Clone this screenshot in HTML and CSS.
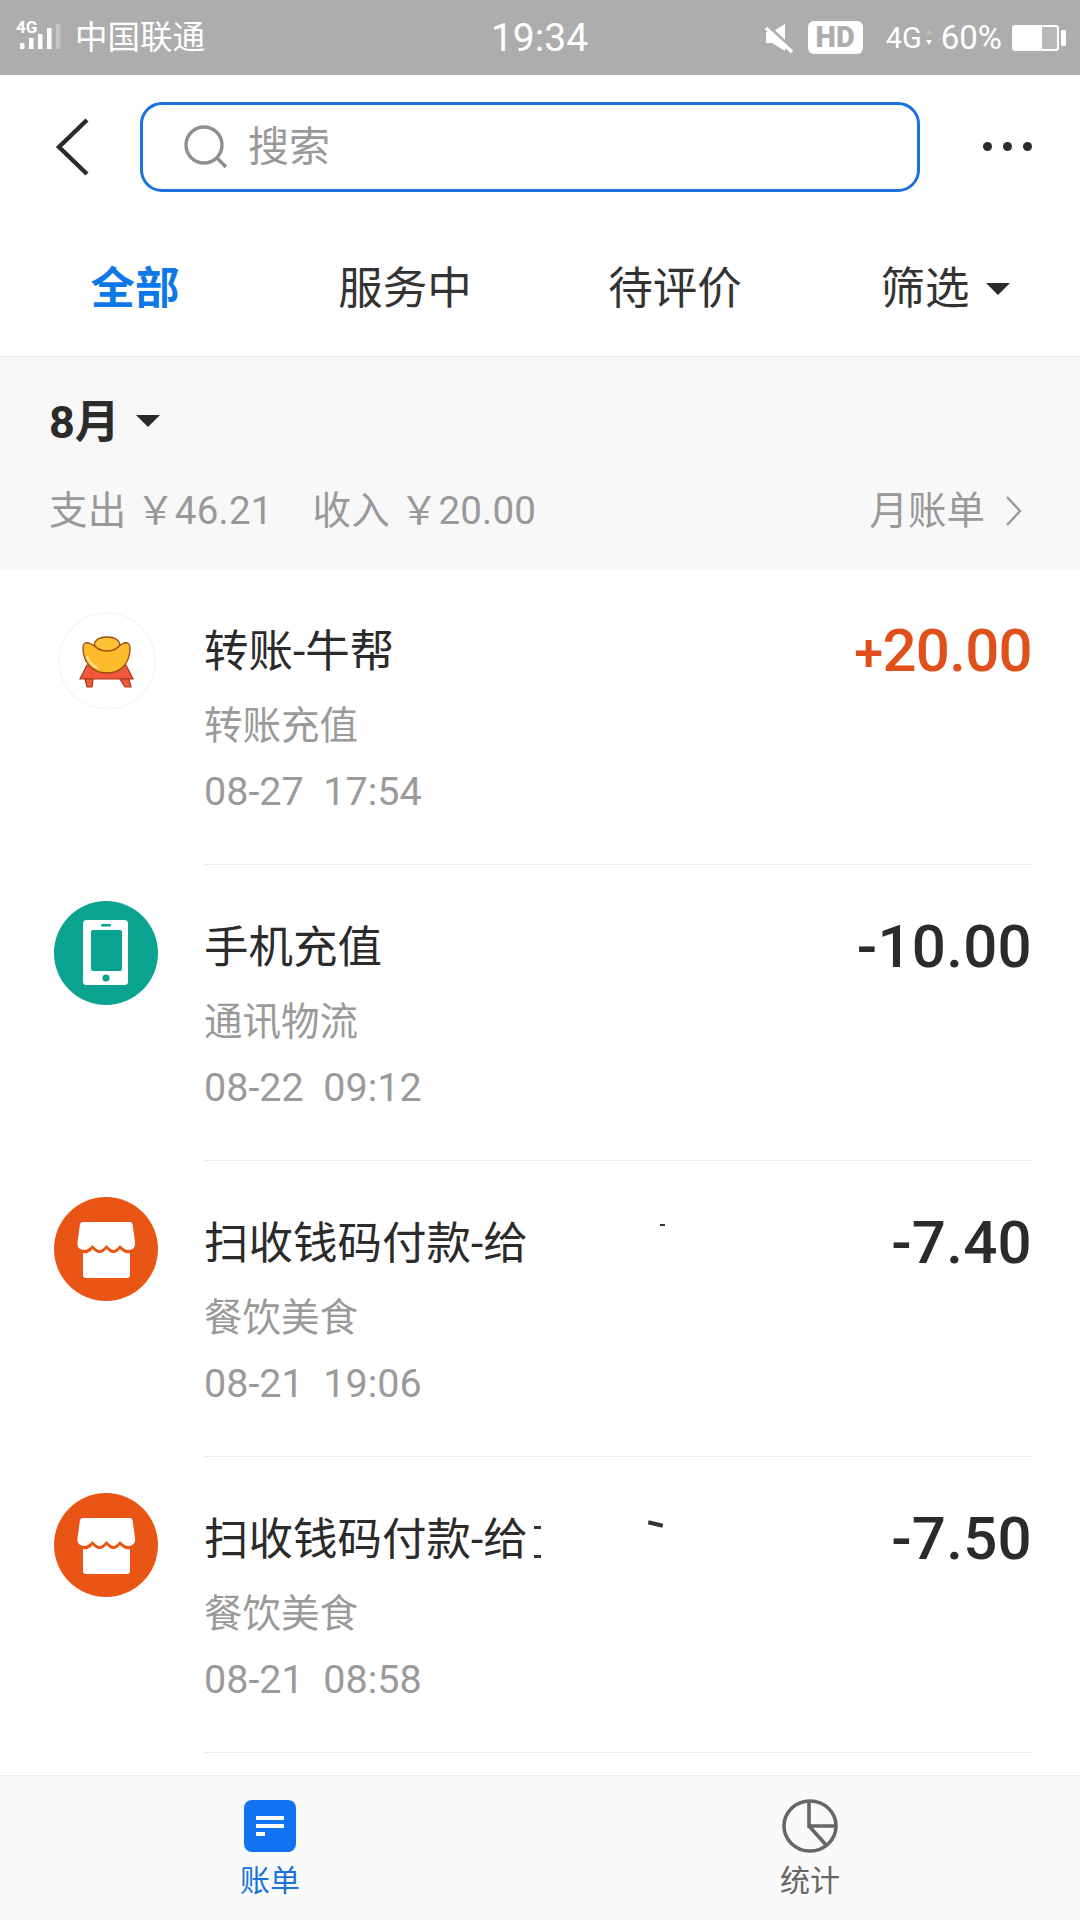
FILE: index.html
```html
<!DOCTYPE html>
<html lang="zh-CN">
<head>
<meta charset="utf-8">
<title>账单</title>
<link rel="stylesheet" href="styles.css">
</head>
<body>
<div class="page">
  <header class="status">
    <div class="status-left">
      <svg class="signal" viewBox="0 0 46 36" width="46" height="36">
        <text x="0" y="15" class="net-label">4G</text>
        <rect x="4" y="25" width="4.500" height="6" rx="1" fill="#fff"/>
        <rect x="13" y="20" width="4.500" height="11" fill="#fff"/>
        <rect x="22" y="16" width="4.500" height="15" fill="#fff"/>
        <rect x="31" y="10" width="4.500" height="21" fill="#fff"/>
        <rect x="40" y="6" width="4.500" height="25" fill="#c6c6c6"/>
      </svg>
      <span class="carrier">中国联通</span>
    </div>
    <div class="time">19:34</div>
    <div class="status-right">
      <svg class="mute" viewBox="0 0 28 30" width="28" height="30">
        <path d="M1 9h6l13-8v27L7 20H1z" fill="#fff"/>
        <path d="M0 0l25 24" stroke="#adadad" stroke-width="3.400" fill="none"/>
        <path d="M1 5l26 24" stroke="#fff" stroke-width="3.400" fill="none"/>
      </svg>
      <span class="hd">HD</span>
      <span class="net">4G<svg class="arrows" viewBox="0 0 8 24" width="8" height="24"><path d="M4 4l3 4H1z" fill="#c4c4c4"/><path d="M4 19l3-5H1z" fill="#fff"/></svg></span>
      <span class="pct">60%</span>
      <span class="battery"><span class="battery-body"><span class="battery-fill"></span></span><span class="battery-nub"></span></span>
    </div>
  </header>

  <nav class="nav">
    <svg class="back" viewBox="0 0 36 60" width="36" height="60"><path d="M33 3L5 30l28 27" fill="none" stroke="#2b2b2b" stroke-width="4.400"/></svg>
    <div class="search">
      <svg class="search-icon" viewBox="0 0 46 46" width="46" height="46"><circle cx="21" cy="21" r="18" fill="none" stroke="#8f8f8f" stroke-width="3.400"/><path d="M34 34l9 9" stroke="#8f8f8f" stroke-width="3.400" fill="none"/></svg>
      <span class="search-text">搜索</span>
    </div>
    <div class="more"><i></i><i></i><i></i></div>
  </nav>

  <div class="tabs">
    <div class="tab tab-active">全部</div>
    <div class="tab">服务中</div>
    <div class="tab">待评价</div>
    <div class="tab">筛选<span class="caret caret-lg"></span></div>
  </div>

  <section class="summary">
    <div class="month">8月<span class="caret"></span></div>
    <div class="totals">
      <div class="totals-left"><span>支出 ￥46.21</span><span>收入 ￥20.00</span></div>
      <div class="bill-link">月账单<svg viewBox="0 0 18 32" width="18" height="32"><path d="M2 2l13 14L2 30" fill="none" stroke="#999" stroke-width="2.400"/></svg></div>
    </div>
  </section>

  <main class="list">
    <article class="row">
      <div class="avatar">
        <svg viewBox="0 0 104 104" width="104" height="104">
          <g transform="translate(0 1)">
            <circle cx="53" cy="55" r="48" fill="#fff" stroke="#f6f6f6" stroke-width="1.500"/>
            <path d="M33 59h39l7 14H26z" fill="#f4583a" stroke="#a5361c" stroke-width="1.200"/>
            <path d="M31 73h8l-1 8h-5zM66 73h9l2 8h-6z" fill="#f4583a" stroke="#a5361c" stroke-width="1.200"/>
            <path d="M35 37c-4-1-6 1-6 5 0 14 9 25 24 25s23-11 23-25c0-4-2-6-6-5l-6 3H41z" fill="#fcbb2a" stroke="#9c4a15" stroke-width="1.300"/>
            <path d="M40 39c1-6 6-8 13-8s12 2 13 8c-3 4-8 6-13 6s-10-2-13-6z" fill="#fcc135" stroke="#9c4a15" stroke-width="1.300"/>
            <path d="M33 50c2 6 6 10 11 12" fill="none" stroke="#fde9b0" stroke-width="1.800"/>
          </g>
        </svg>
      </div>
      <div class="row-body">
        <div class="row-text">
          <div class="title">转账-牛帮</div>
          <div class="sub">转账充值</div>
          <div class="date">08-27&nbsp;&nbsp;17:54</div>
        </div>
        <div class="amount amount-in"><span class="plus">+</span>20.00</div>
      </div>
    </article>

    <article class="row">
      <div class="avatar">
        <svg viewBox="0 0 104 104" width="104" height="104">
          <circle cx="52" cy="52" r="52" fill="#0aa38f"/>
          <rect x="29" y="19" width="45" height="65" rx="3.500" fill="#fff"/>
          <rect x="37" y="29" width="31" height="41" rx="2" fill="#0aa38f"/>
          <rect x="47" y="23" width="10" height="2.400" rx="1.200" fill="#0aa38f"/>
          <circle cx="52" cy="77" r="3.600" fill="#0aa38f"/>
        </svg>
      </div>
      <div class="row-body">
        <div class="row-text">
          <div class="title">手机充值</div>
          <div class="sub">通讯物流</div>
          <div class="date">08-22&nbsp;&nbsp;09:12</div>
        </div>
        <div class="amount">-10.00</div>
      </div>
    </article>

    <article class="row">
      <div class="avatar">
        <svg viewBox="0 0 104 104" width="104" height="104">
          <use href="#shop"/>
        </svg>
      </div>
      <div class="row-body">
        <div class="row-text">
          <div class="title">扫收钱码付款-给<i class="frag frag-a"></i></div>
          <div class="sub">餐饮美食</div>
          <div class="date">08-21&nbsp;&nbsp;19:06</div>
        </div>
        <div class="amount">-7.40</div>
      </div>
    </article>

    <article class="row">
      <div class="avatar">
        <svg viewBox="0 0 104 104" width="104" height="104">
          <use href="#shop"/>
        </svg>
      </div>
      <div class="row-body">
        <div class="row-text">
          <div class="title">扫收钱码付款-给<i class="frag frag-b"></i><i class="frag frag-c"></i></div>
          <div class="sub">餐饮美食</div>
          <div class="date">08-21&nbsp;&nbsp;08:58</div>
        </div>
        <div class="amount">-7.50</div>
      </div>
    </article>
  </main>

  <footer class="bottom">
    <div class="bottom-tab bottom-active">
      <svg viewBox="0 0 52 54" width="52" height="54">
        <rect x="0" y="1" width="52" height="52" rx="8" fill="#1273f0"/>
        <rect x="12" y="17" width="28" height="4" fill="#fff"/>
        <rect x="12" y="25" width="28" height="4" fill="#fff"/>
        <rect x="12" y="33" width="9" height="4" fill="#fff"/>
      </svg>
      <span>账单</span>
    </div>
    <div class="bottom-tab">
      <svg viewBox="0 0 56 54" width="56" height="54">
        <ellipse cx="28" cy="27" rx="26" ry="25" fill="none" stroke="#666" stroke-width="3.600"/>
        <path d="M27 2v25h27M27 27l18 20" fill="none" stroke="#666" stroke-width="3.600"/>
      </svg>
      <span>统计</span>
    </div>
  </footer>
</div>

<svg class="defs" width="0" height="0">
  <defs>
    <g id="shop">
      <circle cx="52" cy="52" r="52" fill="#e85514"/>
      <path d="M30 25H76q2 0 2.500 2L81 45q1 7-6 8-5 0-9-5-4 5-6.500 5t-7-5q-4 5-7 5t-7-5q-4 5-9 5-7-1-6-8l2.500-18q.5-2 2.500-2z" fill="#fff"/>
      <path d="M29 56q6 1 9.500-4q3.500 4 7 4t7-4q3.500 4 7 4t6.500-4q4 5 10 4V78q0 3-3 3H32q-3 0-3-3z" fill="#fff"/>
    </g>
  </defs>
</svg>
</body>
</html>
```
FILE: styles.css
```css
* { box-sizing: border-box; }
html, body { margin: 0; padding: 0; background: #fff; }
body {
  font-family: Roboto, "Noto Sans CJK SC", sans-serif;
  color: #2b2b2b;
}
.page {
  width: 1080px;
  height: 1920px;
  display: flex;
  flex-direction: column;
  overflow: hidden;
}
.defs { display: block; height: 0; }

/* status bar */
.status {
  height: 75px;
  flex: none;
  background: #adadad;
  color: #fff;
  display: grid;
  grid-template-columns: 1fr auto 1fr;
  align-items: center;
  padding: 0 14px 0 16px;
}
.status-left { display: flex; align-items: center; gap: 13px; }
.signal { display: block; margin-top: -3px; }
.net-label { font: 700 17px Roboto, sans-serif; fill: #fff; }
.carrier { font-size: 32.500px; line-height: 40px; }
.time { font-size: 39px; line-height: 44px; margin-right: 3px; }
.status-right { display: flex; align-items: center; justify-content: flex-end; }
.mute { display: block; margin-right: 15px; }
.hd {
  width: 55px;
  height: 33px;
  border-radius: 6px;
  background: #fff;
  color: #adadad;
  font-size: 29px;
  font-weight: 900;
  line-height: 33px;
  text-align: center;
  margin-right: 23px;
}
.net { font-size: 29px; display: flex; align-items: center; line-height: 36px; }
.arrows { display: block; margin: 0 8px 0 3px; }
.pct { font-size: 33px; line-height: 40px; margin-right: 10px; }
.battery { display: flex; align-items: center; gap: 2px; }
.battery-body {
  display: block;
  width: 47px;
  height: 26px;
  border: 2px solid #fff;
  border-radius: 3px;
  background: #b9b9b9;
}
.battery-fill { display: block; width: 28px; height: 100%; background: #fff; }
.battery-nub { display: block; width: 5px; height: 16px; background: #fff; border-radius: 1px; }

/* nav */
.nav {
  height: 145px;
  flex: none;
  display: flex;
  align-items: flex-start;
  padding: 27px 0 0 54px;
}
.back { display: block; margin-top: 15px; }
.search {
  width: 780px;
  height: 90px;
  margin-left: 50px;
  border: 3px solid #1a73dc;
  border-radius: 22px;
  display: flex;
  align-items: center;
  padding-left: 40px;
}
.search-icon { display: block; }
.search-text { font-size: 41px; color: #999; margin-left: 19px; line-height: 50px; }
.more { display: flex; gap: 11px; margin: 40px 0 0 63px; }
.more i { display: block; width: 9px; height: 9px; border-radius: 50%; background: #2b2b2b; }

/* tabs */
.tabs {
  height: 137px;
  flex: none;
  display: grid;
  grid-template-columns: repeat(4, 270px);
  padding-top: 1px;
  border-bottom: 1px solid #ececec;
}
.tab {
  font-size: 44.500px;
  line-height: 60px;
  display: flex;
  align-items: center;
  justify-content: center;
  color: #333;
}
.tab-active { color: #0f78e8; font-weight: 700; }
.caret {
  display: inline-block;
  width: 0;
  height: 0;
  border-left: 12px solid transparent;
  border-right: 12px solid transparent;
  border-top: 12px solid #2b2b2b;
  margin-left: 17px;
}
.caret-lg { margin-left: 16px; }

/* summary */
.summary {
  height: 212px;
  flex: none;
  background: #f8f8f8;
  padding: 40px 57px 0 49px;
}
.month {
  font-size: 45px;
  font-weight: 700;
  line-height: 52px;
  display: flex;
  align-items: center;
}
.month .caret { margin-top: -4px; margin-left: 16px; }
.totals {
  margin-top: 37px;
  display: flex;
  justify-content: space-between;
  align-items: center;
  font-size: 38.500px;
  line-height: 50px;
  color: #999;
}
.totals-left { display: flex; gap: 40px; }
.totals-left span { letter-spacing: 0.200px; }
.bill-link { display: flex; align-items: center; gap: 20px; }

/* list */
.list { flex: 1; min-height: 0; overflow: hidden; }
.row {
  height: 296px;
  display: flex;
  padding-left: 54px;
}
.avatar { width: 104px; flex: none; padding-top: 36px; }
.avatar svg { display: block; }
.row-body {
  flex: 1;
  margin-left: 46px;
  margin-right: 48px;
  padding-top: 53px;
  display: flex;
  justify-content: space-between;
  align-items: flex-start;
  border-bottom: 1px solid #ececec;
}
.title { font-size: 44.500px; line-height: 60px; color: #2b2b2b; white-space: nowrap; }
.sub { font-size: 38.500px; line-height: 60px; margin-top: 14px; color: #9a9a9a; }
.date { font-size: 39.500px; line-height: 60px; margin-top: 6px; color: #9a9a9a; }
.amount {
  font-size: 60px;
  font-weight: 500;
  line-height: 60px;
  letter-spacing: 0.300px;
  margin-top: -1px;
  color: #2b2b2b;
}
.amount-in { color: #e0501b; letter-spacing: -0.700px; }
.plus { font-size: 52px; font-weight: 500; }
.frag { display: inline-block; vertical-align: top; }
.frag-a { width: 5px; height: 2px; margin: 10px 0 0 132px; background: #333; }
.frag-b {
  width: 7px;
  height: 32px;
  margin: 16px 0 0 6px;
  border-top: 3px solid #333;
  border-bottom: 3px solid #333;
}
.frag-c {
  width: 15px;
  height: 4px;
  margin: 12px 0 0 107px;
  background: #333;
  transform: rotate(14deg);
}

/* bottom */
.bottom {
  height: 145px;
  flex: none;
  background: #fafafa;
  border-top: 1px solid #ececec;
  display: grid;
  grid-template-columns: repeat(2, 540px);
  padding-top: 23px;
}
.bottom-tab {
  display: flex;
  flex-direction: column;
  align-items: center;
  font-size: 30px;
  line-height: 40px;
  color: #666;
}
.bottom-tab svg { display: block; margin-bottom: 8px; }
.bottom-active { color: #1a73dc; }
```
